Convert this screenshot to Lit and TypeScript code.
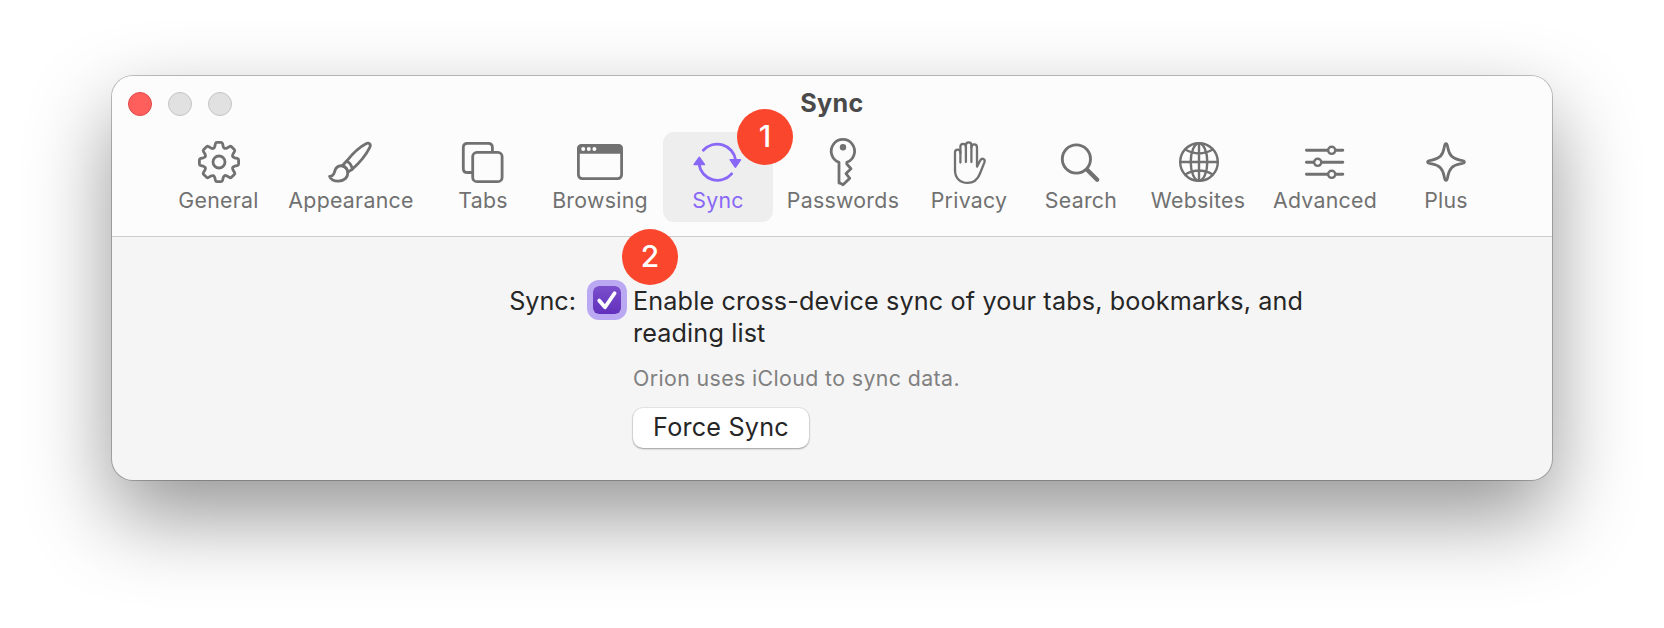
import { LitElement, html, css, svg } from "lit";
import { customElement, property, state } from "lit/decorators.js";
import { classMap } from "lit/directives/class-map.js";

/** Outline of an eight-toothed gear centred on (cx, cy). */
function gearPath(cx: number, cy: number): string {
  const tooth: [string, number[][]][] = [
    ["Q", [[-4.8, -14.1], [-4.2, -15.6]]],
    ["L", [[-3.6, -18.2]]],
    ["Q", [[-3.3, -19.6], [-2, -19.6]]],
    ["L", [[2, -19.6]]],
    ["Q", [[3.3, -19.6], [3.6, -18.2]]],
    ["L", [[4.2, -15.6]]],
    ["Q", [[4.8, -14.1], [5.6, -13.6]]],
  ];
  const parts: string[] = [];
  for (let i = 0; i < 8; i++) {
    const a = (i * Math.PI) / 4;
    const cos = Math.cos(a);
    const sin = Math.sin(a);
    const at = ([x, y]: number[]) =>
      `${(cx + x * cos - y * sin).toFixed(2)} ${(cy + x * sin + y * cos).toFixed(2)}`;
    if (i === 0) parts.push(`M${at([-5.6, -13.6])}`);
    for (const [cmd, pts] of tooth) parts.push(cmd + pts.map(at).join(" "));
  }
  return parts.join("") + "Z";
}

const icons: Record<string, unknown> = {
  general: svg`
    <path d=${gearPath(25, 26)}/>
    <circle cx="25" cy="26" r="6"/>`,
  appearance: svg`
    <path d="M20.4 25.3C26.5 17.6 33.5 11 40 7.7C43 6.2 45.3 8.4 43.8 11.3C40.3 18.3 33.4 26.8 26.2 33.3"/>
    <path d="M20.4 25.3L16.3 29.8C19.2 30.6 21.4 33 21.8 36.2L26.2 33.3C25.7 29.4 23.6 26.4 20.4 25.3Z"/>
    <path d="M16.3 29.8C12.3 29.4 9.6 31.7 8.7 35.4C8 38.4 6.8 40.4 3.6 40.4C4.4 43.4 8.2 45.2 12.4 45.1C18 44.9 22.2 41.6 21.8 36.2C21.4 33 19.2 30.6 16.3 29.8Z"/>`,
  tabs: svg`
    <path d="M34.4 15.5V11.4Q34.4 7.3 30.3 7.3H9.4Q5.3 7.3 5.3 11.4V32.4Q5.3 36.5 9.4 36.5H13.5"/>
    <rect x="14.7" y="16.4" width="29.4" height="29.2" rx="4.2"/>`,
  browsing: svg`
    <rect x="3.4" y="9.4" width="43.2" height="33.2" rx="3.8"/>
    <path class="solid" d="M3.4 16.4V13Q3.4 9.4 7 9.4H43Q46.6 9.4 46.6 13V16.4Z"/>
    <circle class="paper" cx="8.2" cy="13.1" r="2"/>
    <circle class="paper" cx="13.8" cy="13.1" r="2"/>
    <circle class="paper" cx="19.4" cy="13.1" r="2"/>`,
  sync: svg`
    <path d="M10.3 14.3A18.6 18.6 0 0 1 42.6 24"/>
    <path d="M6.1 28.5A18.6 18.6 0 0 0 38.6 37.8"/>
    <path class="solid arrow" d="M37.4 23.8H47.4L42.4 31Z"/>
    <path class="solid arrow" d="M1.3 28.4H11.3L6.3 21.4Z"/>`,
  passwords: svg`
    <path d="M21 47V26.2A11.7 11.7 0 1 1 28.8 26.2V28L33 32.7L28 37.6L31.8 42.3L25 48.8L21 46.4"/>
    <circle class="dot" cx="25" cy="11.3" r="3.2"/>`,
  privacy: svg`
    <g stroke-width="2.3">
      <path d="M11 34V16.3C11 12.6 16.4 12.6 16.4 16.3V26.6"/>
      <path d="M16.4 17V10.7C16.4 7 21.9 7 21.9 10.7V26"/>
      <path d="M21.9 11V9.2C21.9 5.4 27.4 5.4 27.4 9.2V26"/>
      <path d="M27.4 11.5C27.4 7.2 33 7.2 33 11.5V30.6L36.3 24.3C38 21.4 41.6 22.9 40.4 26.3L36 37.5C33.6 43.8 29.4 46.9 23.5 46.9C16 46.9 11 42 11 34"/>
    </g>`,
  search: svg`
    <circle cx="20.4" cy="23" r="14.1" stroke-width="2.9"/>
    <path d="M31.4 34L41.2 43.8" stroke-width="4.3"/>`,
  websites: svg`
    <g stroke-width="2.4">
      <circle cx="26" cy="26" r="18.8"/>
      <ellipse cx="26" cy="26" rx="8.3" ry="18.8"/>
      <path d="M26 7.2V44.8M7.2 26H44.8M12.3 13.5Q26 21.4 39.7 13.5M12.3 38.5Q26 30.6 39.7 38.5"/>
    </g>`,
  advanced: svg`
    <path d="M6.4 14.3H42.8M6.4 26.3H42.8M6.4 38.3H42.8" stroke-width="2.9"/>
    <circle class="knob" cx="31.7" cy="14.3" r="3.6"/>
    <circle class="knob" cx="17.7" cy="26.3" r="3.6"/>
    <circle class="knob" cx="31.7" cy="38.3" r="3.6"/>`,
  plus: svg`
    <path d="M25 7.6C26.4 7.6 26.4 9.5 26.9 12C28.4 19.6 31.4 22.6 39 24.1C41.5 24.6 43.4 24.6 43.4 26C43.4 27.4 41.5 27.4 39 27.9C31.4 29.4 28.4 32.4 26.9 40C26.4 42.5 26.4 44.4 25 44.4C23.6 44.4 23.6 42.5 23.1 40C21.6 32.4 18.6 29.4 11 27.9C8.5 27.4 6.6 27.4 6.6 26C6.6 24.6 8.5 24.6 11 24.1C18.6 22.6 21.6 19.6 23.1 12C23.6 9.5 23.6 7.6 25 7.6Z"/>`,
};

@customElement("step-badge")
export class StepBadge extends LitElement {
  static styles = css`
    :host {
      display: flex;
      align-items: center;
      justify-content: center;
      box-sizing: border-box;
      width: 56px;
      height: 56px;
      padding-bottom: 2px;
      border-radius: 50%;
      background: #fa462d;
      color: #fff;
      font: 500 30px/36px Inter, "Liberation Sans", sans-serif;
      letter-spacing: 0;
    }
  `;
  render() {
    return html`<slot></slot>`;
  }
}

@customElement("toolbar-item")
export class ToolbarItem extends LitElement {
  @property() icon = "";
  @property() label = "";
  @property({ type: Boolean }) active = false;

  static styles = css`
    :host {
      display: block;
    }
    .item {
      display: flex;
      flex-direction: column;
      align-items: center;
      box-sizing: border-box;
      width: 100%;
      height: 90px;
      padding: 4px 0 0;
      border: 0;
      border-radius: 11px;
      background: none;
      color: #717171;
      font: 400 21.3px/26px Inter, "Liberation Sans", sans-serif;
      letter-spacing: 0.28px;
    }
    .active {
      background: #eeeeee;
      color: #8a68f7;
    }
    svg {
      display: block;
      width: 50px;
      height: 50px;
      margin-bottom: 1px;
      overflow: visible;
      fill: none;
      stroke: currentColor;
      stroke-width: 2.8;
      stroke-linecap: round;
      stroke-linejoin: round;
    }
    .solid {
      fill: currentColor;
    }
    .arrow {
      stroke-width: 1.8;
    }
    .dot {
      fill: currentColor;
      stroke: none;
    }
    .paper {
      fill: #fcfcfc;
      stroke: none;
    }
    .knob {
      fill: #fcfcfc;
      stroke-width: 2.4;
    }
  `;

  render() {
    return html`
      <button class=${classMap({ item: true, active: this.active })}>
        <svg viewBox="0 0 50 50">${icons[this.icon]}</svg>
        <span>${this.label}</span>
      </button>
    `;
  }
}

@customElement("app-root")
export class AppRoot extends LitElement {
  @state() private current = "Sync";

  private readonly tabs = [
    "General",
    "Appearance",
    "Tabs",
    "Browsing",
    "Sync",
    "Passwords",
    "Privacy",
    "Search",
    "Websites",
    "Advanced",
    "Plus",
  ];

  static styles = css`
    :host {
      display: block;
      box-sizing: border-box;
      height: 628px;
      padding: 76px 112px;
      overflow: hidden;
      background: #fff;
      color: #262626;
      font: 400 25.2px/32px Inter, "Liberation Sans", sans-serif;
      letter-spacing: 0.14px;
    }
    .window {
      height: 404px;
      border-radius: 21px;
      background: #f5f5f5;
      box-shadow:
        0 0 0 1px rgba(0, 0, 0, 0.23),
        0 36px 84px rgba(0, 0, 0, 0.42);
    }
    .header {
      padding-bottom: 14px;
      border-bottom: 1px solid #cdcdcd;
      border-radius: 21px 21px 0 0;
      background: #fcfcfc;
    }
    .titlebar {
      display: grid;
      grid-template-columns: 1fr auto 1fr;
      align-items: center;
      height: 56px;
      padding: 0 16px;
    }
    .lights {
      display: flex;
      gap: 16px;
    }
    .light {
      box-sizing: border-box;
      width: 24px;
      height: 24px;
      border: 1px solid #c4c4c4;
      border-radius: 50%;
      background: #e1e1e1;
    }
    .close {
      border-color: #e0484a;
      background: #ff5f5c;
    }
    .title {
      padding-bottom: 2px;
      color: #4a4a4a;
      font-weight: 700;
      letter-spacing: 0.3px;
    }
    .toolbar {
      display: grid;
      grid-template-columns: 109px 156px 108px 126px 110px 140px 112px 112px 122px 132px 110px;
      padding-left: 52px;
    }
    .slot {
      position: relative;
    }
    .on-tab {
      position: absolute;
      left: 74px;
      top: -23px;
    }
    .content {
      display: grid;
      grid-template-columns: 464px 28px 700px;
      column-gap: 17px;
      padding-top: 48px;
    }
    .caption {
      justify-self: end;
      letter-spacing: 0;
    }
    .check {
      position: relative;
      width: 28px;
      height: 28px;
      margin-top: 1px;
      border-radius: 6px;
      background: linear-gradient(#7a4fcb, #6230bd);
      box-shadow: 0 0 0 6px #baa8f2;
    }
    .check svg {
      display: block;
      width: 28px;
      height: 28px;
      fill: none;
      stroke: #fff;
      stroke-width: 3.8;
      stroke-linecap: round;
      stroke-linejoin: round;
    }
    .on-check {
      position: absolute;
      left: 29px;
      top: -57px;
    }
    .details {
      margin-left: -5px;
    }
    p {
      margin: 0;
    }
    .hint {
      margin: 16px 0 17px;
      color: #808080;
      font-size: 21.3px;
      line-height: 26px;
      letter-spacing: 0.4px;
    }
    .action {
      display: block;
      box-sizing: border-box;
      width: 176px;
      height: 40px;
      padding: 0 0 2px;
      border: 0;
      border-radius: 10px;
      background: #fff;
      box-shadow:
        0 0 0 1px rgba(0, 0, 0, 0.06),
        0 1px 2px rgba(0, 0, 0, 0.32);
      color: #262626;
      font: inherit;
      letter-spacing: 0.2px;
    }
  `;

  render() {
    return html`
      <main class="window">
        <header class="header">
          <div class="titlebar">
            <div class="lights">
              <span class="light close"></span>
              <span class="light"></span>
              <span class="light"></span>
            </div>
            <div class="title">${this.current}</div>
          </div>
          <nav class="toolbar">
            ${this.tabs.map(
              (name) => html`
                <div class="slot">
                  <toolbar-item
                    icon=${name.toLowerCase()}
                    label=${name}
                    ?active=${name === this.current}
                  ></toolbar-item>
                  ${name === "Sync" ? html`<step-badge class="on-tab">1</step-badge>` : null}
                </div>
              `,
            )}
          </nav>
        </header>
        <section class="content">
          <div class="caption">Sync:</div>
          <div class="check">
            <svg viewBox="0 0 28 28"><path d="M6.2 14.6L12 21.2L21.6 7.2" /></svg>
            <step-badge class="on-check">2</step-badge>
          </div>
          <div class="details">
            <p>Enable cross-device sync of your tabs, bookmarks, and<br />reading list</p>
            <p class="hint">Orion uses iCloud to sync data.</p>
            <button class="action">Force Sync</button>
          </div>
        </section>
      </main>
    `;
  }
}
